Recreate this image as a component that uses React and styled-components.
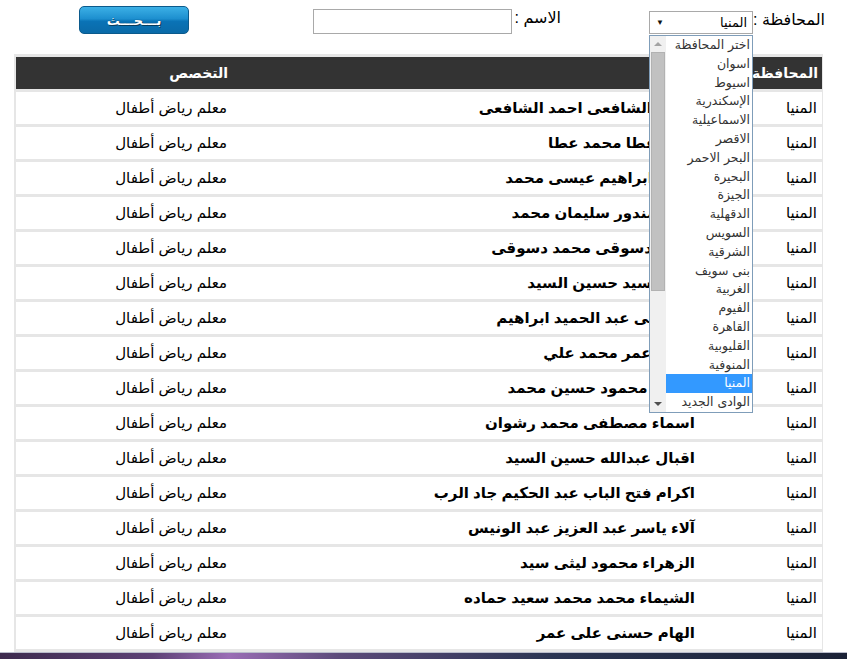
import React from 'react'
import styled, { createGlobalStyle } from 'styled-components'

const Global = createGlobalStyle`
  html, body { margin: 0; padding: 0; background: #fff; }
`

const provinces = [
  'اختر المحافظة', 'اسوان', 'اسيوط', 'الإسكندرية', 'الاسماعيلية', 'الاقصر',
  'البحر الاحمر', 'البحيرة', 'الجيزة', 'الدقهلية', 'السويس', 'الشرقية',
  'بنى سويف', 'الغربية', 'الفيوم', 'القاهرة', 'القليوبية', 'المنوفية',
  'المنيا', 'الوادى الجديد'
]

const people = [
  'محمد الشافعى احمد الشافعى',
  'احمد عطا محمد عطا',
  'سعيد ابراهيم عيسى محمد',
  'احمد مندور سليمان محمد',
  'محمد دسوقى محمد دسوقى',
  'امل السيد حسين السيد',
  'هبة على عبد الحميد ابراهيم',
  'ايمان عمر محمد علي',
  'اسماء محمود حسين محمد',
  'اسماء مصطفى محمد رشوان',
  'اقبال عبدالله حسين السيد',
  'اكرام فتح الباب عبد الحكيم جاد الرب',
  'آلاء ياسر عبد العزيز عبد الونيس',
  'الزهراء محمود ليثى سيد',
  'الشيماء محمد محمد سعيد حماده',
  'الهام حسنى على عمر'
]

export default function App() {
  return (
    <Page>
      <Global />
      <TopBar>
        <Label w={68} top={5}>المحافظة :</Label>
        <SelectBox>
          <span>المنيا</span>
          <Caret>▼</Caret>
          <DropList>
            <Options>
              {provinces.map((p) => (
                <Option key={p} selected={p === 'المنيا'}>{p}</Option>
              ))}
            </Options>
            <ScrollBar>
              <Arrow up />
              <Track>
                <Thumb />
              </Track>
              <Arrow />
            </ScrollBar>
          </DropList>
        </SelectBox>
        <Label w={44} top={3} gap={88}>الاسم :</Label>
        <TextInput />
        <SearchButton>بـــحـــث</SearchButton>
      </TopBar>

      <TableWrap>
        <Table>
          <thead>
            <tr>
              <Th w={122}>المحافظة</Th>
              <Th w={468}>الاسم</Th>
              <Th w={216}>التخصص</Th>
            </tr>
          </thead>
          <tbody>
            {people.map((name) => (
              <tr key={name}>
                <Td>المنيا</Td>
                <Td bold>{name}</Td>
                <Td>معلم رياض أطفال</Td>
              </tr>
            ))}
          </tbody>
        </Table>
      </TableWrap>
      <TaskStrip />
    </Page>
  )
}

const Page = styled.div`
  direction: rtl;
  width: 847px;
  height: 659px;
  overflow: hidden;
  display: flex;
  flex-direction: column;
  font-family: "Liberation Sans", "DejaVu Sans", sans-serif;
  color: #000;
`

const TopBar = styled.div`
  display: flex;
  align-items: flex-start;
  height: 55px;
  box-sizing: border-box;
  padding: 6px 22px 0 0;
`

const Label = styled.div`
  width: ${(p) => p.w}px;
  flex: none;
  margin-top: ${(p) => p.top}px;
  margin-right: ${(p) => p.gap || 0}px;
  font-size: 16px;
  line-height: 18px;
  white-space: nowrap;
`

const SelectBox = styled.div`
  position: relative;
  flex: none;
  margin: 5px 4px 0 0;
  width: 104px;
  height: 23px;
  box-sizing: border-box;
  border: 1px solid #a9a9a9;
  background: #fff;
  display: flex;
  align-items: center;
  justify-content: space-between;
  padding: 0 5px 0 6px;
  font-size: 13px;
`

const Caret = styled.span`
  font-size: 8px;
  color: #111;
`

const DropList = styled.div`
  position: absolute;
  top: 23px;
  left: -1px;
  width: 104px;
  height: 378px;
  box-sizing: border-box;
  border: 1px solid #7f9db9;
  background: #fff;
  display: flex;
  z-index: 5;
`

const Options = styled.div`
  flex: 1;
  display: flex;
  flex-direction: column;
`

const Option = styled.div`
  height: 18.8px;
  line-height: 18.8px;
  padding-right: 2px;
  font-size: 12.5px;
  font-family: "DejaVu Sans", sans-serif;
  color: ${(p) => (p.selected ? '#fff' : '#333')};
  background: ${(p) => (p.selected ? '#3399ff' : 'transparent')};
  white-space: nowrap;
  overflow: hidden;
`

const ScrollBar = styled.div`
  width: 16px;
  background: #f0f0f0;
  display: flex;
  flex-direction: column;
`

const Arrow = styled.div`
  height: 16px;
  display: flex;
  align-items: center;
  justify-content: center;
  &::before {
    content: '';
    border-left: 4px solid transparent;
    border-right: 4px solid transparent;
    ${(p) => (p.up ? 'border-bottom: 4px solid #a3a3a3;' : 'border-top: 4px solid #505050;')}
  }
`

const Track = styled.div`
  flex: 1;
`

const Thumb = styled.div`
  height: 239px;
  margin: 0 1px;
  background: #c1c1c1;
  border: 1px solid #b2b2b2;
  box-sizing: border-box;
`

const TextInput = styled.div`
  flex: none;
  margin: 3px 5px 0 0;
  width: 199px;
  height: 25px;
  box-sizing: border-box;
  border: 1px solid #a9a9a9;
  background: #fff;
`

const SearchButton = styled.button`
  flex: none;
  margin: 0 124px 0 0;
  width: 110px;
  height: 28px;
  border: 1px solid #0b5a8c;
  border-radius: 5px;
  background: linear-gradient(#3cb0e6 0%, #1d8fcf 45%, #0a73b6 55%, #0a6aa8 100%);
  color: #fff;
  font-family: "DejaVu Sans", sans-serif;
  font-weight: bold;
  font-size: 13px;
  text-shadow: 0 0 1px #0a3d5e, 1px 1px 0 #0a3d5e;
  padding: 0;
  cursor: pointer;
`

const TableWrap = styled.div`
  margin: 0 24px 0 14px;
  background: #e6e6e6;
  padding: 0 1px 0 2px;
`

const Table = styled.table`
  width: 806px;
  border-collapse: separate;
  border-spacing: 0 3px;
  table-layout: fixed;
`

const Th = styled.th`
  width: ${(p) => p.w}px;
  box-sizing: border-box;
  height: 32px;
  padding: 0 4px;
  background: #333333;
  color: #fff;
  font-size: 14px;
  font-weight: bold;
  text-align: right;
`

const Td = styled.td`
  height: 32px;
  padding: 0 5px;
  background: #fff;
  font-size: 15px;
  font-weight: ${(p) => (p.bold ? 'bold' : 'normal')};
  text-align: right;
  white-space: nowrap;
  overflow: hidden;
`

const TaskStrip = styled.div`
  height: 6px;
  border-top: 1px solid #b9bccb;
  background: linear-gradient(90deg, #3d2b4e 0%, #5d4175 18%, #9a6db5 27%, #5c4b7a 40%, #2b3553 65%, #1b2236 100%);
`
